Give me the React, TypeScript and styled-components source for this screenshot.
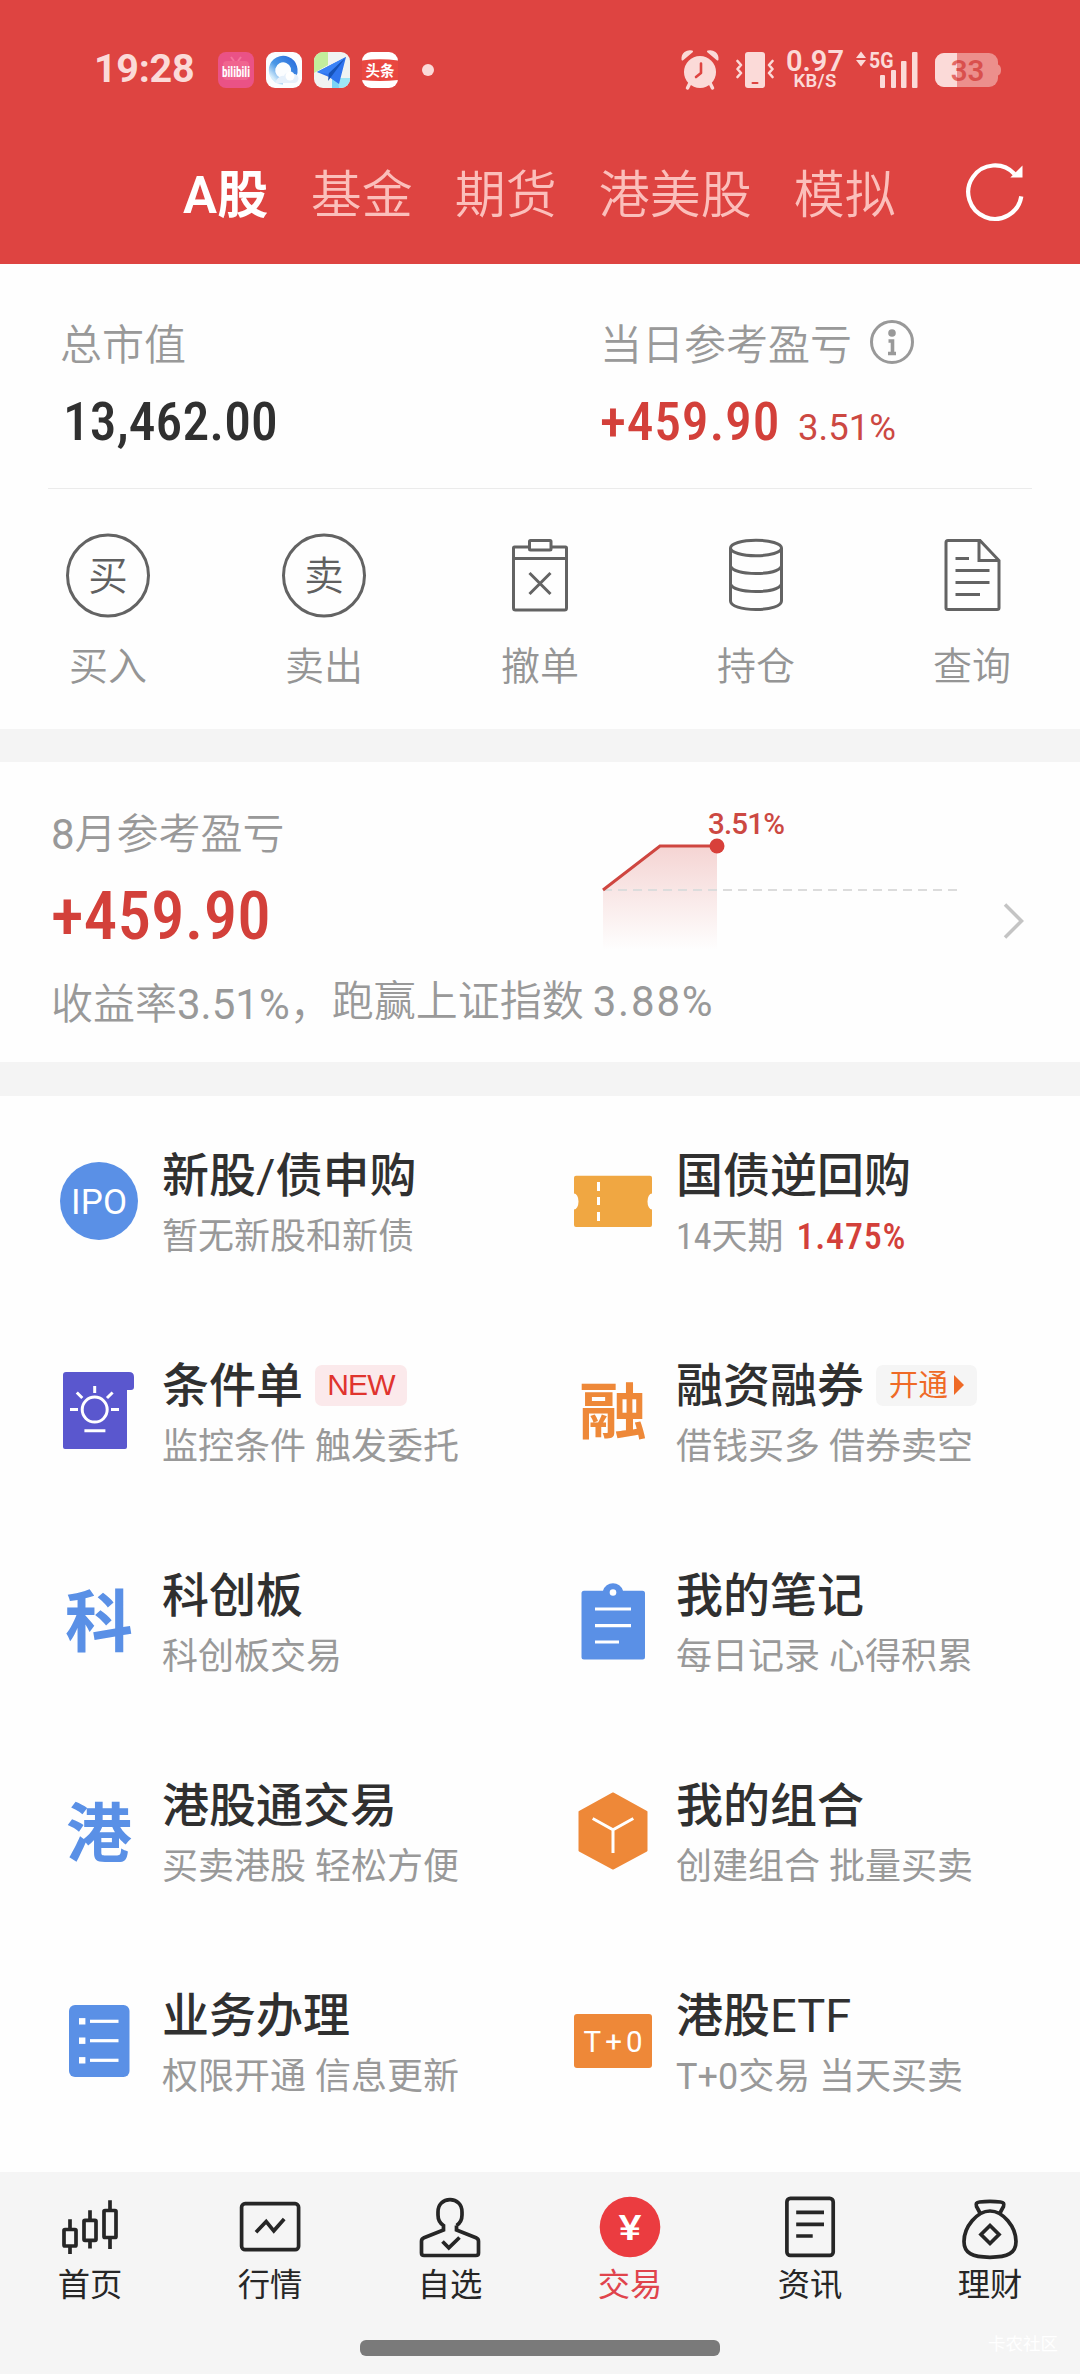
import React from "react";
import styled, { createGlobalStyle } from "styled-components";

const FONT = `Roboto, "Noto Sans CJK SC", sans-serif`;
const BLUE = "#5a90e6";
const ORANGE = "#ee8838";
const PALE = "#fbdad8";

const Global = createGlobalStyle`
  * { box-sizing: border-box; }
  body { margin: 0; background: #fff; font-family: ${FONT}; }
  svg { display: block; flex: none; overflow: visible; }
  svg text { font-family: ${FONT}; }
`;

const Page = styled.div`
  width: 1080px;
  height: 2374px;
  display: flex;
  flex-direction: column;
  background: #fefefe;
  overflow: hidden;
  white-space: nowrap;
`;

/* ---------- header ---------- */
const Header = styled.header`
  height: 264px;
  background: #de4441;
`;
const StatusBar = styled.div`
  height: 140px;
  padding: 0 79px 0 94px;
  display: flex;
  align-items: center;
  color: ${PALE};
`;
const Clock = styled.span`
  width: 124px;
  font-size: 39.5px;
  line-height: 48px;
  font-weight: 700;
  letter-spacing: -0.3px;
  margin-top: -3px;
`;
const AppIcons = styled.div`
  display: flex;
  gap: 12px;
  align-items: center;
  flex: 1;
`;
const Dot = styled.span`
  width: 12px;
  height: 12px;
  margin-left: 12px;
  border-radius: 50%;
  background: ${PALE};
`;
const Speed = styled.div`
  width: 58px;
  margin: 0 11px 0 12px;
  display: flex;
  flex-direction: column;
  align-items: center;
  font-weight: 600;
`;
const SpeedValue = styled.span`
  font-size: 29px;
  line-height: 23px;
`;
const SpeedUnit = styled.span`
  font-size: 18.5px;
  line-height: 17px;
  letter-spacing: 0.3px;
`;
const TabBar = styled.nav`
  height: 124px;
  padding: 0 54px 13px 183px;
  display: flex;
  align-items: center;
  justify-content: space-between;
`;
const Tabs = styled.div`
  display: flex;
  gap: 42px;
`;
const Tab = styled.span<{ $active?: boolean }>`
  font-size: 51px;
  line-height: 64px;
  letter-spacing: ${(p) => (p.$active ? 0.3 : 0)}px;
  font-weight: ${(p) => (p.$active ? 600 : 350)};
  color: ${(p) => (p.$active ? "#fff" : "#fbbfbb")};
`;

/* ---------- account summary ---------- */
const Summary = styled.section`
  height: 224px;
  padding: 52px 0 0 60px;
  display: grid;
  grid-template-columns: 540px 1fr;
`;
const Metric = styled.div`
  display: flex;
  flex-direction: column;
  gap: 16px;
`;
const MetricLabel = styled.div`
  display: flex;
  align-items: center;
  gap: 16px;
  font-size: 42px;
  line-height: 60px;
  font-weight: 350;
  color: #999;
`;
const MetricRow = styled.div<{ $indent?: number }>`
  display: flex;
  align-items: baseline;
  height: 60px;
  padding-left: ${(p) => p.$indent ?? 0}px;
`;
const Amount = styled.span<{ $size: number; $width: number; $up?: boolean; $track?: number }>`
  display: inline-block;
  width: ${(p) => p.$width}px;
  font-size: ${(p) => p.$size}px;
  line-height: 60px;
  font-weight: 550;
  font-stretch: 84%;
  letter-spacing: ${(p) => p.$track ?? 0}px;
  color: ${(p) => (p.$up ? "#d3403a" : "#303030")};
`;
const Percent = styled.span`
  font-size: 36.5px;
  color: #cc4842;
`;
const Divider = styled.div`
  height: 1px;
  margin: 0 48px;
  background: #ebebeb;
`;
const Actions = styled.section`
  height: 240px;
  padding-top: 43px;
  display: grid;
  grid-template-columns: repeat(5, 216px);
`;
const Action = styled.div`
  display: flex;
  flex-direction: column;
  align-items: center;
  gap: 24px;
  font-size: 39px;
  line-height: 50px;
  font-weight: 350;
  color: #959595;
`;
const Gap = styled.div<{ $h: number }>`
  height: ${(p) => p.$h}px;
  background: #f4f4f4;
`;

/* ---------- monthly profit ---------- */
const Monthly = styled.section`
  height: 300px;
  padding: 43px 55px 0 51px;
  display: flex;
  justify-content: space-between;
`;
const MonthlyBody = styled.div``;
const MonthlyTop = styled.div`
  display: flex;
  height: 170px;
`;
const MonthlyFigures = styled.div`
  width: 549px;
  display: flex;
  flex-direction: column;
  gap: 21px;
`;
const MonthlyTitle = styled.div`
  font-size: 42px;
  line-height: 60px;
  font-weight: 350;
  color: #999;
`;
const MonthlyNote = styled.div`
  display: flex;
  align-items: flex-start;
  font-size: 42px;
  line-height: 60px;
  font-weight: 350;
  color: #999;
`;
const Figure = styled.span<{ $track?: number }>`
  font-weight: 400;
  letter-spacing: ${(p) => p.$track ?? 0}px;
`;
const Benchmark = styled.span`
  display: flex;
  gap: 9px;
  margin: -3px 0 0 0;
`;

/* ---------- services ---------- */
const Services = styled.section`
  height: 1076px;
  padding-left: 59px;
  display: grid;
  grid-template-columns: 514px 1fr;
  grid-auto-rows: 210px;
`;
const Service = styled.div`
  display: flex;
  align-items: center;
  gap: 23px;
`;
const ServiceText = styled.div`
  padding-top: 11px;
`;
const ServiceTitle = styled.div`
  display: flex;
  align-items: center;
  height: 61px;
  font-size: 47px;
  line-height: 61px;
  font-weight: 450;
  color: #303030;
`;
const ServiceSub = styled.div`
  height: 62px;
  font-size: 36px;
  line-height: 62px;
  color: #999;
`;
const Days = styled.span`
  font-stretch: 84%;
`;
const Rate = styled.span`
  margin-left: 4px;
  font-weight: 550;
  font-stretch: 84%;
  letter-spacing: 0.8px;
  color: #d3403a;
`;
const Badge = styled.span<{ $tone: "new" | "open" }>`
  display: flex;
  align-items: center;
  justify-content: center;
  gap: 6px;
  width: ${(p) => (p.$tone === "new" ? 92 : 101)}px;
  height: 41px;
  margin: -1px 0 0 12px;
  border-radius: 7px;
  font-family: ${(p) => (p.$tone === "new" ? `"Liberation Sans", Arial, sans-serif` : FONT)};
  font-size: ${(p) => (p.$tone === "new" ? 30 : 29.5)}px;
  line-height: 40px;
  letter-spacing: ${(p) => (p.$tone === "new" ? -0.8 : 0)}px;
  font-weight: 400;
  color: ${(p) => (p.$tone === "new" ? "#e0342e" : "#ef6a26")};
  background: ${(p) => (p.$tone === "new" ? "#fbe9eb" : "#f5f5f5")};
`;

/* ---------- bottom navigation ---------- */
const Footer = styled.footer`
  height: 202px;
  background: #f5f5f5;
  display: flex;
  flex-direction: column;
`;
const NavRow = styled.nav`
  height: 168px;
  padding-top: 23px;
  display: grid;
  grid-template-columns: repeat(6, 180px);
`;
const NavItem = styled.div<{ $active?: boolean }>`
  display: flex;
  flex-direction: column;
  align-items: center;
  font-size: 32.3px;
  line-height: 48px;
  color: ${(p) => (p.$active ? "#e0444c" : "#262626")};
`;
const HomeRow = styled.div`
  height: 12px;
  display: grid;
  grid-template-columns: 360px 360px 1fr;
`;
const HomeBar = styled.span`
  grid-column: 2;
  border-radius: 6px;
  background: #7a7a7a;
`;
const Watermark = styled.span`
  justify-self: end;
  margin: -8px 22px 0 0;
  font-size: 17.5px;
  line-height: 24px;
  color: #fff;
`;

/* ---------- status icons ---------- */
const BiliIcon = () => (
  <svg width="36" height="36" viewBox="0 0 36 36">
    <rect width="36" height="36" rx="8" fill="#ea5286" />
    <path d="M13 5l3 4M23 5l-3 4" stroke="#f4749c" strokeWidth="2" />
    <rect x="5" y="9" width="26" height="19" rx="4" fill="#f0648f" />
    <text x="4" y="24.5" fontSize="14" fontWeight="700" fontStretch="75%" fill="#fff" textLength="28" lengthAdjust="spacingAndGlyphs">bilibili</text>
  </svg>
);
const BrowserIcon = () => (
  <svg width="36" height="36" viewBox="0 0 36 36">
    <defs>
      <linearGradient id="q" x1="0" y1="1" x2="1" y2="0">
        <stop offset="0.1" stopColor="#d4ecfb" />
        <stop offset="0.45" stopColor="#4b98e6" />
        <stop offset="1" stopColor="#2b6fdd" />
      </linearGradient>
    </defs>
    <rect width="36" height="36" rx="9" fill="#fbfdff" />
    <path d="M26.5 24.5A11.2 11.2 0 1 0 17 29.5" fill="none" stroke="url(#q)" strokeWidth="6.4" />
    <path d="M9 31h19a4.500 4.500 0 0 0 0-9 6 6 0 0 0-10 2c-3-1-7 2-9 7z" fill="#e6f0fb" />
    <circle cx="24" cy="24" r="4.500" fill="#fff" />
  </svg>
);
const MapIcon = () => (
  <svg width="36" height="36" viewBox="0 0 36 36">
    <defs>
      <clipPath id="m"><rect width="36" height="36" rx="9" /></clipPath>
    </defs>
    <g clipPath="url(#m)">
      <rect width="36" height="36" fill="#f0f3f2" />
      <path d="M0 0h14v13L0 21z" fill="#c3ee9c" />
      <path d="M18 26h18v10H18z" fill="#9ee5f5" />
      <path d="M18 36V20h5l2 16z" fill="#58c4f5" opacity=".5" />
      <path d="M3 20L32 5 25 32l-10-7z" fill="#2f74ee" />
      <path d="M32 5L14 29l1-9z" fill="#1653b8" />
      <path d="M3 20L32 5 14 22z" fill="#3a82f6" />
    </g>
  </svg>
);
const NewsIcon = () => (
  <svg width="36" height="36" viewBox="0 0 36 36">
    <rect width="36" height="36" rx="9" fill="#fff" />
    <path d="M0 8.500q18-2.500 36 0v19.500q-18 2-36 0z" fill="#e9473f" />
    <text x="18" y="23.500" fontSize="14.500" fontWeight="700" fill="#fff" textAnchor="middle">头条</text>
  </svg>
);
const AlarmIcon = () => (
  <svg width="38" height="40" viewBox="0 0 38 40" fill={PALE}>
    <circle cx="19" cy="22" r="16" />
    <path d="M1.500 9.500C1 4 6 0 11 1.500z" stroke={PALE} strokeWidth="2" strokeLinejoin="round" />
    <path d="M36.500 9.500C37 4 32 0 27 1.500z" stroke={PALE} strokeWidth="2" strokeLinejoin="round" />
    <path d="M9 33l-2.500 5M29 33l2.500 5" stroke={PALE} strokeWidth="3.500" strokeLinecap="round" />
    <path d="M20 13.500v9.500l-5 4" fill="none" stroke="#de4441" strokeWidth="2.600" strokeLinecap="round" strokeLinejoin="round" />
  </svg>
);
const VibrateIcon = () => (
  <svg width="38" height="38" viewBox="0 0 38 38" style={{ marginLeft: 17 }}>
    <rect x="9" y="1" width="20" height="36" rx="3" fill={PALE} />
    <rect x="15.500" y="31" width="7" height="2" rx="1" fill="#de4441" />
    <path d="M1.500 10l3.500 4-3.500 4 3.500 4-3.500 4M36.500 10L33 14l3.500 4-3.500 4 3.500 4" fill="none" stroke={PALE} strokeWidth="2.600" strokeLinejoin="round" strokeLinecap="round" />
  </svg>
);
const SignalIcon = () => (
  <svg width="64" height="48" viewBox="0 -5 64 48" fill={PALE}>
    <path d="M6 0.500l5 6.500H1zM6 15.500l5-6.500H1z" />
    <text x="14" y="16.500" fontSize="22" fontWeight="700" textLength="24.500" lengthAdjust="spacingAndGlyphs">5G</text>
    <rect x="25" y="24" width="5" height="13" rx="1" />
    <rect x="36" y="19" width="5" height="18" rx="1" />
    <rect x="46" y="10" width="5.500" height="27" rx="1" />
    <rect x="57" y="1" width="5.500" height="36" rx="1" />
  </svg>
);
const BatteryIcon = () => (
  <svg width="66" height="34" viewBox="0 0 66 34" style={{ marginLeft: 16 }}>
    <defs>
      <clipPath id="b"><rect width="63" height="34" rx="9" /></clipPath>
      <linearGradient id="bt" x1="15" x2="50" gradientUnits="userSpaceOnUse">
        <stop offset="0.2" stopColor="#e36a66" />
        <stop offset="0.2" stopColor="#d9504d" />
      </linearGradient>
    </defs>
    <g clipPath="url(#b)">
      <rect width="63" height="34" fill="#ec8f8c" />
      <rect width="22" height="34" fill={PALE} />
    </g>
    <path d="M63 11.500q3 1 3 5.500t-3 5.500z" fill="#ec8f8c" />
    <text x="32.500" y="28" fontSize="29.500" fontWeight="600" textAnchor="middle" fill="url(#bt)">33</text>
  </svg>
);
const RefreshIcon = () => (
  <svg width="58" height="64" viewBox="0 0 58 64" fill="none" style={{ marginTop: -6 }}>
    <path d="M53.300 35.300A26.700 26.700 0 1 1 46.500 13" stroke="#fff" strokeWidth="4.200" />
    <path d="M54.500 4.500v12H42.300z" fill="#fff" />
  </svg>
);
const InfoIcon = () => (
  <svg width="44" height="44" viewBox="0 0 44 44" style={{ marginTop: -8, marginLeft: 2 }}>
    <circle cx="22" cy="22" r="20.500" fill="none" stroke="#999" strokeWidth="3" />
    <circle cx="22" cy="13" r="3.800" fill="#999" />
    <path d="M18.500 21h4v12.500M18 33.500h8" fill="none" stroke="#999" strokeWidth="3.600" />
  </svg>
);

/* ---------- action icons ---------- */
const actionStroke = { fill: "none", stroke: "#636363", strokeWidth: 3 };
const CoinIcon = ({ char }: { char: string }) => (
  <svg width="86" height="86" viewBox="0 0 86 86">
    <circle cx="43" cy="43.500" r="40.500" {...actionStroke} />
    <text x="43" y="58" fontSize="39.500" textAnchor="middle" fill="#606060">{char}</text>
  </svg>
);
const CancelIcon = () => (
  <svg width="86" height="86" viewBox="0 0 86 86" {...actionStroke}>
    <path d="M32 15H17.500q-1 0-1 1v60q0 2 2 2h49q2 0 2-2V16q0-1-1-1H54M16.500 26.500h53" />
    <rect x="32.500" y="8.500" width="21.500" height="9.500" rx="1" />
    <path d="M32.500 41l21 21M53.500 41l-21 21" />
  </svg>
);
const StackIcon = () => (
  <svg width="86" height="86" viewBox="0 0 86 86" {...actionStroke}>
    <ellipse cx="43" cy="16" rx="25.500" ry="7.800" />
    <path d="M17.500 16v53c0 5 11 8.500 25.500 8.500S68.500 74 68.500 69V16M17.500 34c2 5 13 7.500 25.500 7.500S66.500 39 68.500 34M17.500 52c2 5 13 7.500 25.500 7.500S66.500 57 68.500 52" />
  </svg>
);
const DocIcon = () => (
  <svg width="86" height="86" viewBox="0 0 86 86" {...actionStroke}>
    <path d="M49.500 8.500H19q-2 0-2 2V76q0 1.500 2 1.500h49q2 0 2-1.500V28.500L51 8.500zM50 9v19.500h20M26.500 26.500H40M26.500 38.500h34M26.500 50.500h34M26.500 62.500H51" />
  </svg>
);

const TrendChart = () => (
  <svg width="360" height="150" viewBox="0 0 360 150">
    <defs>
      <linearGradient id="trend" x1="0" y1="0" x2="0" y2="1">
        <stop offset="0" stopColor="#d3403a" stopOpacity=".22" />
        <stop offset="1" stopColor="#d3403a" stopOpacity="0" />
      </linearGradient>
    </defs>
    <path d="M3 85L60 41h57v104H3z" fill="url(#trend)" />
    <path d="M3 85h355" stroke="#dcdcdc" strokeWidth="2" strokeDasharray="9 6" />
    <path d="M3 85L60 41h57" fill="none" stroke="#cf4640" strokeWidth="3" />
    <circle cx="117" cy="41" r="7.500" fill="#d8403a" />
    <text x="108" y="29" fontSize="29.500" fontWeight="500" fill="#cc4842" textLength="77">3.51%</text>
  </svg>
);
const Chevron = () => (
  <svg width="22" height="40" viewBox="0 0 22 40" style={{ marginTop: 96 }}>
    <path d="M2 3.500L18.500 20 2 36.500" fill="none" stroke="#c4c4c4" strokeWidth="3.500" />
  </svg>
);

/* ---------- service icons ---------- */
const Tile = ({ children }: { children: React.ReactNode }) => (
  <svg width="80" height="80" viewBox="0 0 80 80">{children}</svg>
);
const CharTile = ({ char, color, y, size, width }: { char: string; color: string; y: number; size: number; width: number }) => (
  <Tile>
    <text x={40 - width / 2} y={y} fontSize={size} fontWeight="700" fill={color} textLength={width} lengthAdjust="spacingAndGlyphs">{char}</text>
  </Tile>
);
const ipo = (
  <Tile>
    <circle cx="40" cy="40" r="39" fill={BLUE} />
    <text x="12" y="53" fontSize="35" fontWeight="450" fill="#fff" textLength="56">IPO</text>
  </Tile>
);
const ticket = (
  <Tile>
    <path d="M3 14.700h74q2 0 2 2V32.500a4.500 8 0 0 0 0 16v15.500q0 2-2 2H3q-2 0-2-2V48.500a4.500 8 0 0 0 0-16V16.700q0-2 2-2z" fill="#f0a742" />
    <path d="M25.500 21v9M25.500 36v8M25.500 51v9" stroke="#fff" strokeWidth="3" />
  </Tile>
);
const condition = (
  <Tile>
    <path d="M7 1h63q5 0 5 5v10q0 3-3 3h-4v57q0 2-2 2H6q-2 0-2-2V4q0-3 3-3z" fill="#5a57ce" />
    <g fill="none" stroke="#fff" strokeWidth="3">
      <circle cx="35.700" cy="38.600" r="12.500" />
      <path d="M35.700 15v7M11 38.600h8M52 38.600h8M17.800 21.500l5.500 5.500M53.600 21.500L48 27M25.400 59.700h21" />
    </g>
  </Tile>
);
const notes = (
  <Tile>
    <path d="M11 9.700h19a10.400 10.400 0 0 1 20 0h19.500q2.500 0 2.500 2.500V76q0 2.500-2.500 2.500H11q-2.500 0-2.500-2.500V12.200q0-2.500 2.500-2.500z" fill={BLUE} />
    <circle cx="40" cy="11.500" r="3.300" fill="#fff" />
    <path d="M22 28h36M22 44.700h36M22 61h24" stroke="#fff" strokeWidth="3.200" />
  </Tile>
);
const cube = (
  <Tile>
    <path d="M40 2.500L73.500 21v38.500L40 77.500 6.500 59.500V21z" fill={ORANGE} stroke={ORANGE} strokeWidth="2" strokeLinejoin="round" />
    <path d="M19.700 27.500L40 38.700l20.300-11.200M40 38.700V62" fill="none" stroke="#fff" strokeWidth="3" />
  </Tile>
);
const list = (
  <Tile>
    <rect x="10" y="4" width="60.500" height="72" rx="6" fill={BLUE} />
    {[20.3, 39.7, 59.3].map((y) => (
      <g key={y} fill="#fff">
        <rect x="20" y={y - 3.2} width="6.400" height="6.400" />
        <rect x="31" y={y - 1.6} width="28.500" height="3.200" />
      </g>
    ))}
  </Tile>
);
const tzero = (
  <Tile>
    <rect x="1" y="13" width="78" height="54" rx="3" fill={ORANGE} />
    <text x="10.500" y="50.500" fontSize="29.500" fontWeight="450" fill="#fff" textLength="59">T+0</text>
  </Tile>
);

type Item = { icon: React.ReactNode; title: string; sub: React.ReactNode; badge?: React.ReactNode };
const services: Item[] = [
  { icon: ipo, title: "新股/债申购", sub: "暂无新股和新债" },
  { icon: ticket, title: "国债逆回购", sub: <><Days>14天期</Days> <Rate>1.475%</Rate></> },
  { icon: condition, title: "条件单", sub: "监控条件 触发委托", badge: <Badge $tone="new">NEW</Badge> },
  {
    icon: <CharTile char="融" color={ORANGE} y={63} size={61} width={68} />,
    title: "融资融券",
    sub: "借钱买多 借券卖空",
    badge: (
      <Badge $tone="open">
        开通
        <svg width="10" height="20" viewBox="0 0 10 20"><path d="M0 0l10 10L0 20z" fill="#ef6a26" /></svg>
      </Badge>
    ),
  },
  { icon: <CharTile char="科" color={BLUE} y={65} size={67} width={68} />, title: "科创板", sub: "科创板交易" },
  { icon: notes, title: "我的笔记", sub: "每日记录 心得积累" },
  { icon: <CharTile char="港" color={BLUE} y={64.5} size={64} width={66} />, title: "港股通交易", sub: "买卖港股 轻松方便" },
  { icon: cube, title: "我的组合", sub: "创建组合 批量买卖" },
  { icon: list, title: "业务办理", sub: "权限开通 信息更新" },
  { icon: tzero, title: "港股ETF", sub: "T+0交易 当天买卖" },
];

/* ---------- navigation icons ---------- */
const NavSvg = ({ children }: { children: React.ReactNode }) => (
  <svg width="64" height="66" viewBox="0 0 64 66" fill="none" stroke="#262626" strokeWidth="3.700">{children}</svg>
);
const navItems = [
  {
    label: "首页",
    icon: (
      <NavSvg>
        <rect x="6" y="34.500" width="12" height="16.500" rx="1" />
        <rect x="26" y="25.300" width="12" height="20" rx="1" />
        <rect x="46" y="15.500" width="12" height="27" rx="1" />
        <path d="M12 24.300V34M12 51.500v7.500M32 15.300V25M32 46v7.500M52 5.300V15M52 43v11" />
      </NavSvg>
    ),
  },
  {
    label: "行情",
    icon: (
      <NavSvg>
        <rect x="3.600" y="8.700" width="57" height="46" rx="3.500" />
        <path d="M18 37.300L28.200 26.500l7.600 9.300L46.200 24" />
      </NavSvg>
    ),
  },
  {
    label: "自选",
    icon: (
      <NavSvg>
        <path d="M38.500 30.500v4.500L58 42.800q2.500 1 2.500 3.500V58q0 2.500-2.500 2.500H6q-2.500 0-2.500-2.500V46.300q0-2.500 2.500-3.500L25.500 35v-4.500C21.500 28 20 24.500 20 20v-3C20 9.500 25 4.700 32 4.700S44 9.500 44 17v3c0 4.500-1.500 8-5.500 10.500" />
        <path d="M24.500 46.500l6.300 6.300L41.500 42.500" />
      </NavSvg>
    ),
  },
  {
    label: "交易",
    active: true,
    icon: (
      <NavSvg>
        <circle cx="32" cy="32" r="30.300" fill="#eb3c40" stroke="none" />
        <text x="20.500" y="45" fontSize="34.500" fontWeight="500" fill="#fff" stroke="none" textLength="23" lengthAdjust="spacingAndGlyphs">¥</text>
      </NavSvg>
    ),
  },
  {
    label: "资讯",
    icon: (
      <NavSvg>
        <rect x="8.900" y="3.400" width="46.300" height="57" rx="3.500" />
        <path d="M18.200 17.300H46M18.200 29.300H46M18.200 41h16.500" />
      </NavSvg>
    ),
  },
  {
    label: "理财",
    icon: (
      <NavSvg>
        <path d="M22 18l-3.500-6.500q-1.500-4 3-4.500 10.500-1.200 21 0 4.500.5 3 4.500L42 18" />
        <path d="M32 16C45 16 58 32 58 46.500 58 58 50 62.300 32 62.300S6 58 6 46.500C6 32 19 16 32 16z" />
        <path d="M32 30.500l9 9-9 9-9-9z" />
      </NavSvg>
    ),
  },
];

export default function App() {
  return (
    <Page>
      <Global />
      <Header>
        <StatusBar>
          <Clock>19:28</Clock>
          <AppIcons>
            <BiliIcon />
            <BrowserIcon />
            <MapIcon />
            <NewsIcon />
            <Dot />
          </AppIcons>
          <AlarmIcon />
          <VibrateIcon />
          <Speed>
            <SpeedValue>0.97</SpeedValue>
            <SpeedUnit>KB/S</SpeedUnit>
          </Speed>
          <SignalIcon />
          <BatteryIcon />
        </StatusBar>
        <TabBar>
          <Tabs>
            <Tab $active>A股</Tab>
            <Tab>基金</Tab>
            <Tab>期货</Tab>
            <Tab>港美股</Tab>
            <Tab>模拟</Tab>
          </Tabs>
          <RefreshIcon />
        </TabBar>
      </Header>

      <Summary>
        <Metric>
          <MetricLabel>总市值</MetricLabel>
          <MetricRow $indent={3}>
            <Amount $size={53.5} $width={220} $track={0.1}>13,462.00</Amount>
          </MetricRow>
        </Metric>
        <Metric>
          <MetricLabel>当日参考盈亏<InfoIcon /></MetricLabel>
          <MetricRow>
            <Amount $size={53.5} $width={198} $track={0.8} $up>+459.90</Amount>
            <Percent>3.51%</Percent>
          </MetricRow>
        </Metric>
      </Summary>
      <Divider />
      <Actions>
        <Action><CoinIcon char="买" />买入</Action>
        <Action><CoinIcon char="卖" />卖出</Action>
        <Action><CancelIcon />撤单</Action>
        <Action><StackIcon />持仓</Action>
        <Action><DocIcon />查询</Action>
      </Actions>
      <Gap $h={33} />

      <Monthly>
        <MonthlyBody>
          <MonthlyTop>
            <MonthlyFigures>
              <MonthlyTitle><Figure>8</Figure>月参考盈亏</MonthlyTitle>
              <Amount $size={67} $width={230} $track={0.2} $up>+459.90</Amount>
            </MonthlyFigures>
            <TrendChart />
          </MonthlyTop>
          <MonthlyNote>
            收益率<Figure>3.51%</Figure>，
            <Benchmark>
              跑赢上证指数
              <Figure $track={1.8}>3.88%</Figure>
            </Benchmark>
          </MonthlyNote>
        </MonthlyBody>
        <Chevron />
      </Monthly>
      <Gap $h={34} />

      <Services>
        {services.map((s) => (
          <Service key={s.title}>
            {s.icon}
            <ServiceText>
              <ServiceTitle>{s.title}{s.badge}</ServiceTitle>
              <ServiceSub>{s.sub}</ServiceSub>
            </ServiceText>
          </Service>
        ))}
      </Services>

      <Footer>
        <NavRow>
          {navItems.map((n) => (
            <NavItem key={n.label} $active={n.active}>
              {n.icon}
              {n.label}
            </NavItem>
          ))}
        </NavRow>
        <HomeRow>
          <HomeBar />
          <Watermark>卡农社区</Watermark>
        </HomeRow>
      </Footer>
    </Page>
  );
}
